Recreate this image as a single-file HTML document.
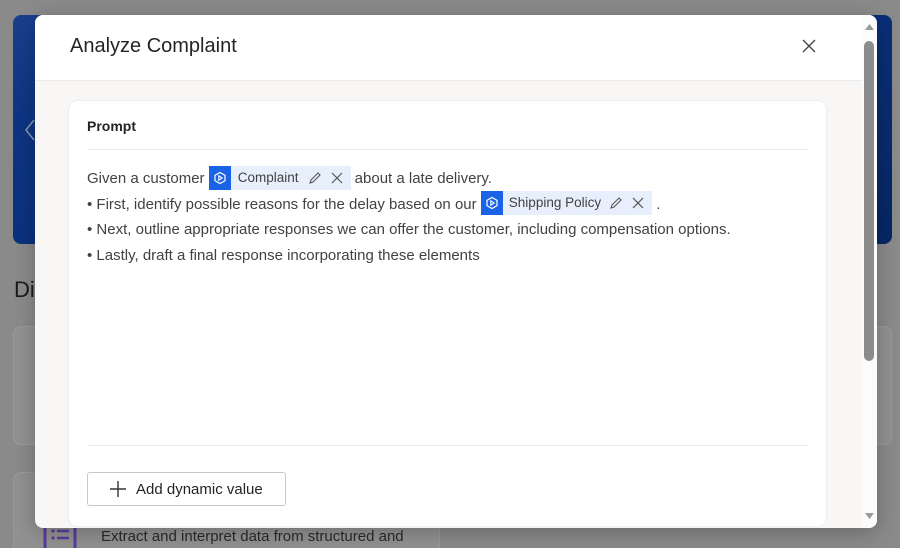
<!DOCTYPE html>
<html><head><meta charset="utf-8"><style>
*{box-sizing:border-box;margin:0;padding:0}
html,body{width:900px;height:548px;overflow:hidden}
body{background:#8a8a8a;font-family:"Segoe UI","Liberation Sans",sans-serif;position:relative}
.banner{position:absolute;left:13px;top:15px;width:879px;height:229px;border-radius:8px;background:linear-gradient(160deg,#1a3f8c 0%,#0d3584 20%,#0a2f78 60%,#072664)}
.di{position:absolute;left:14px;top:277px;font-size:22px;color:#1a1a1a}
.bgc{position:absolute;background:#919191;border-radius:8px;border:1px solid #9a9a9a}
.dlg{position:absolute;left:35px;top:15px;width:842px;height:513px;background:#f8f7f6;border-radius:8px;overflow:hidden;box-shadow:0 4px 20px rgba(0,0,0,.25)}
.hdr{position:absolute;left:0;top:0;width:827px;height:66px;background:#fff;border-bottom:1px solid #ebebeb}
.title{position:absolute;left:35px;top:20px;font-size:20px;color:#242424}
.card{position:absolute;left:34px;top:86px;width:757px;height:425px;background:#fff;border-radius:8px;box-shadow:0 0 2px rgba(0,0,0,.12)}
.lbl{position:absolute;left:18px;top:17px;font-size:14px;font-weight:600;color:#242424}
.sep{position:absolute;left:18px;width:721px;height:1px;background:#ebebeb}
.txt{position:absolute;left:18px;top:65px;font-size:15px;color:#424242;line-height:25.7px;white-space:nowrap}
.chip{display:inline-flex;align-items:center;height:24px;background:#e8effc;vertical-align:middle;margin:-4px 0 -1px;font-size:13.5px;color:#424242}
.ic{width:22px;height:24px;background:#1a63e6;display:flex;align-items:center;justify-content:center}
.btn{position:absolute;left:18px;top:371px;width:199px;height:34px;border:1px solid #c8c8c8;border-radius:3px;font-size:15px;color:#242424;display:flex;align-items:center;padding-left:20px}
.sb{position:absolute;left:827px;top:0;width:15px;height:513px;background:#fbfbfb}
</style></head><body>
<div class="banner"></div>
<svg style="position:absolute;left:24px;top:118px" width="12" height="24"><path d="M10 2L2 12L10 22" fill="none" stroke="#8a96b0" stroke-width="1.5"/></svg>
<div class="di">Di</div>
<div class="bgc" style="left:13px;top:326px;width:100px;height:119px"></div>
<div class="bgc" style="left:800px;top:326px;width:92px;height:119px"></div>
<div class="bgc" style="left:13px;top:472px;width:427px;height:90px"></div>
<svg style="position:absolute;left:43px;top:520px" width="34" height="30"><rect x="2" y="2" width="30" height="30" rx="5" fill="none" stroke="#5a3aa0" stroke-width="3"/><circle cx="10" cy="11" r="1.6" fill="#5a3aa0"/><circle cx="10" cy="18" r="1.6" fill="#5a3aa0"/><path d="M14 11h12M14 18h12" stroke="#5a3aa0" stroke-width="2.5"/></svg>
<div style="position:absolute;left:101px;top:528px;font-size:15px;color:#2a2a2a">Extract and interpret data from structured and</div>
<div class="dlg">
 <div class="hdr"><div class="title">Analyze Complaint</div>
  <svg style="position:absolute;left:766px;top:23px" width="16" height="16"><path d="M2 2L14 14M14 2L2 14" stroke="#424242" stroke-width="1.3"/></svg></div>
 <div class="card">
  <div class="lbl">Prompt</div>
  <div class="sep" style="top:48px"></div>
  <div class="txt">
   <div>Given a customer <span class="chip"><span class="ic"><svg width="14" height="14"><path d="M7 1.5L12 4.3V9.7L7 12.5L2 9.7V4.3Z" fill="none" stroke="#fff" stroke-width="1.2"/><path d="M5.8 4.8L9.2 7L5.8 9.2Z" fill="none" stroke="#fff" stroke-width="1.1"/></svg></span><span style="padding:0 8px 0 7px">Complaint</span><svg width="16" height="16"><path d="M3 13L4 10L11 3L13 5L6 12Z" fill="none" stroke="#555" stroke-width="1.1"/></svg><svg width="28" height="16"><path d="M9 3L19 13M19 3L9 13" stroke="#555" stroke-width="1.2"/></svg></span> about a late delivery.</div>
   <div>• First, identify possible reasons for the delay based on our <span class="chip"><span class="ic"><svg width="14" height="14"><path d="M7 1.5L12 4.3V9.7L7 12.5L2 9.7V4.3Z" fill="none" stroke="#fff" stroke-width="1.2"/><path d="M5.8 4.8L9.2 7L5.8 9.2Z" fill="none" stroke="#fff" stroke-width="1.1"/></svg></span><span style="padding:0 7px 0 6px">Shipping Policy</span><svg width="16" height="16"><path d="M3 13L4 10L11 3L13 5L6 12Z" fill="none" stroke="#555" stroke-width="1.1"/></svg><svg width="28" height="16"><path d="M9 3L19 13M19 3L9 13" stroke="#555" stroke-width="1.2"/></svg></span> .</div>
   <div>• Next, outline appropriate responses we can offer the customer, including compensation options.</div>
   <div>• Lastly, draft a final response incorporating these elements</div>
  </div>
  <div class="sep" style="top:344px"></div>
  <div class="btn"><svg width="20" height="20" style="margin-right:8px"><path d="M10 2V18M2 10H18" stroke="#333" stroke-width="1.4"/></svg>Add dynamic value</div>
 </div>
 <div class="sb">
  <svg style="position:absolute;left:2px;top:8px" width="11" height="8"><path d="M1 7L5.5 1L10 7Z" fill="#9a9a9a"/></svg>
  <div style="position:absolute;left:2px;top:26px;width:10px;height:320px;border-radius:5px;background:#8c8c8c"></div>
  <svg style="position:absolute;left:2px;top:497px" width="11" height="8"><path d="M1 1L5.5 7L10 1Z" fill="#9a9a9a"/></svg>
 </div>
</div>
</body></html>
